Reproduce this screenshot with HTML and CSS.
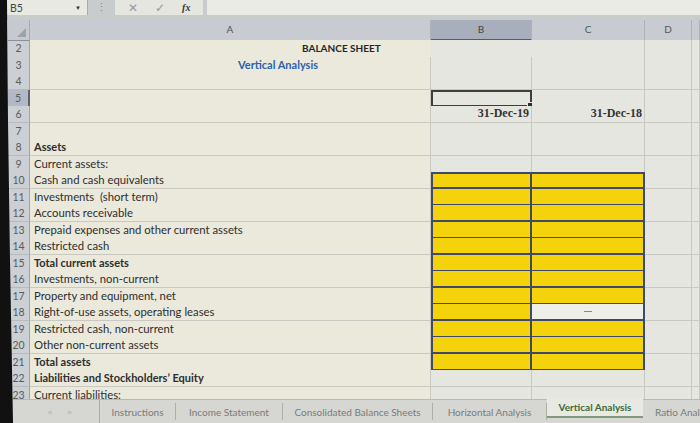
FILE: index.html
```html
<!DOCTYPE html>
<html>
<head>
<meta charset="utf-8">
<link rel="stylesheet" href="styles.css">
</head>
<body>
<div class="screen">
  <div class="topbar">
    <div class="namebox"><span>B5</span><span class="caret">&#9660;</span></div>
    <div class="dots">&#8942;</div>
    <div class="fbtns"><span class="fx-x">&#10005;</span><span class="fx-ok">&#10003;</span><span class="fx-fn">fx</span></div>
    <div class="formula"></div>
  </div>
  <div class="sheet">
    <div class="row hdr">
      <div class="corner"><span class="tri"></span></div>
      <div class="ch">A</div>
      <div class="ch selh">B</div>
      <div class="ch">C</div>
      <div class="ch">D</div>
      <div class="ch"></div>
    </div>
    <div class="row"><div class="rh">2</div><div class="c a nog"><span class="title">BALANCE SHEET</span></div><div class="c nog"></div><div class="c"></div><div class="c"></div><div class="c"></div></div>
    <div class="row"><div class="rh">3</div><div class="c a"><span class="sub">Vertical Analysis</span></div><div class="c"></div><div class="c"></div><div class="c"></div><div class="c"></div></div>
    <div class="row"><div class="rh">4</div><div class="c a"></div><div class="c"></div><div class="c"></div><div class="c"></div><div class="c"></div></div>
    <div class="row"><div class="rh selr">5</div><div class="c a"></div><div class="c active"></div><div class="c"></div><div class="c"></div><div class="c"></div></div>
    <div class="row"><div class="rh">6</div><div class="c a"></div><div class="c r date">31-Dec-19</div><div class="c r date">31-Dec-18</div><div class="c"></div><div class="c"></div></div>
    <div class="row"><div class="rh">7</div><div class="c a"></div><div class="c"></div><div class="c"></div><div class="c"></div><div class="c"></div></div>
    <div class="row"><div class="rh">8</div><div class="c a b">Assets</div><div class="c"></div><div class="c"></div><div class="c"></div><div class="c"></div></div>
    <div class="row"><div class="rh">9</div><div class="c a">Current assets:</div><div class="c"></div><div class="c"></div><div class="c"></div><div class="c"></div></div>
    <div class="row"><div class="rh">10</div><div class="c a">Cash and cash equivalents</div><div class="c y yl yt"></div><div class="c y yt"></div><div class="c"></div><div class="c"></div></div>
    <div class="row"><div class="rh">11</div><div class="c a">Investments&nbsp; (short term)</div><div class="c y yl"></div><div class="c y"></div><div class="c"></div><div class="c"></div></div>
    <div class="row"><div class="rh">12</div><div class="c a">Accounts receivable</div><div class="c y yl"></div><div class="c y"></div><div class="c"></div><div class="c"></div></div>
    <div class="row"><div class="rh">13</div><div class="c a">Prepaid expenses and other current assets</div><div class="c y yl"></div><div class="c y"></div><div class="c"></div><div class="c"></div></div>
    <div class="row"><div class="rh">14</div><div class="c a">Restricted cash</div><div class="c y yl"></div><div class="c y"></div><div class="c"></div><div class="c"></div></div>
    <div class="row"><div class="rh">15</div><div class="c a b">Total current assets</div><div class="c y yl"></div><div class="c y"></div><div class="c"></div><div class="c"></div></div>
    <div class="row"><div class="rh">16</div><div class="c a">Investments, non-current</div><div class="c y yl"></div><div class="c y"></div><div class="c"></div><div class="c"></div></div>
    <div class="row"><div class="rh">17</div><div class="c a">Property and equipment, net</div><div class="c y yl"></div><div class="c y"></div><div class="c"></div><div class="c"></div></div>
    <div class="row"><div class="rh">18</div><div class="c a">Right-of-use assets, operating leases</div><div class="c y yl"></div><div class="c y w"><span class="dash"></span></div><div class="c"></div><div class="c"></div></div>
    <div class="row"><div class="rh">19</div><div class="c a">Restricted cash, non-current</div><div class="c y yl"></div><div class="c y"></div><div class="c"></div><div class="c"></div></div>
    <div class="row"><div class="rh">20</div><div class="c a">Other non-current assets</div><div class="c y yl"></div><div class="c y"></div><div class="c"></div><div class="c"></div></div>
    <div class="row"><div class="rh">21</div><div class="c a b">Total assets</div><div class="c y yl"></div><div class="c y"></div><div class="c"></div><div class="c"></div></div>
    <div class="row"><div class="rh">22</div><div class="c a b">Liabilities and Stockholders&#8217; Equity</div><div class="c"></div><div class="c"></div><div class="c"></div><div class="c"></div></div>
    <div class="row"><div class="rh">23</div><div class="c a">Current liabilities:</div><div class="c"></div><div class="c"></div><div class="c"></div><div class="c"></div></div>
  </div>
  <div class="tabs">
    <div class="nav"><span>&#9664;</span><span>&#9654;</span></div>
    <div class="tab t1">Instructions</div>
    <div class="tab t2">Income Statement</div>
    <div class="tab t3">Consolidated Balance Sheets</div>
    <div class="tab t4">Horizontal Analysis</div>
    <div class="tab t5 on">Vertical Analysis</div>
    <div class="tab t6">Ratio Anal</div>
  </div>
  <div class="bezel"></div>
</div>
</body>
</html>
```
FILE: styles.css
```css
* { box-sizing: border-box; margin: 0; padding: 0; }
html, body { width: 700px; height: 423px; overflow: hidden; background: #d8d9d4; }
body { font-family: "Lato", "Liberation Sans", sans-serif; color: #2a2a2a; }

.screen { position: relative; width: 700px; height: 423px; display: flex; flex-direction: column; overflow: hidden; }

/* top formula bar */
.topbar { height: 20px; flex: none; display: flex; background: #c9cccd; padding-bottom: 5px; }
.namebox { width: 88px; background: #e9e9e4; border-right: 1px solid #a9abab; display: flex; align-items: center; justify-content: space-between; padding: 0 6px 0 10px; font-size: 10.5px; color: #444; }
.caret { font-size: 6px; color: #333; }
.dots { width: 27px; text-align: center; color: #888; font-size: 11px; line-height: 14px; }
.fbtns { width: 88px; background: #e6e6e1; display: flex; align-items: center; justify-content: space-around; padding: 0 4px; font-size: 12px; color: #9a9a9a; }
.fx-fn { font-family: "Liberation Serif", serif; font-style: italic; font-weight: bold; color: #333; font-size: 10px; }
.formula { flex: 1; margin-left: 4px; background: #ebebe6; }

/* sheet */
.sheet { flex: 1; overflow: hidden; padding-left: 8px; background: #e4e4de; }
.row { display: grid; grid-template-columns: 22px 401px 101px 113px 47px 1fr; height: 16.5px; }
.row.hdr { height: 20px; }
.corner { background: #c6cad0; border-right: 1px solid #a7abb1; border-bottom: 1px solid #8d9197; position: relative; }
.tri { position: absolute; right: 3px; bottom: 3px; width: 0; height: 0; border-left: 9px solid transparent; border-bottom: 9px solid #9ea3aa; }
.ch { background: #c8ccd2; border-right: 1px solid #aeb2b8; border-bottom: 1px solid #8d9197; font-size: 10px; color: #555; text-align: center; line-height: 19px; }
.ch.selh { background: #a8aebc; border-bottom: 2px solid #565b66; color: #444; }

.rh { background: #ccd0d5; border-right: 1px solid #9fa3a9; border-bottom: 1px solid #b7bbc0; font-size: 10.5px; color: #5a5a5a; text-align: center; line-height: 16px; }
.rh.selr { background: #b3b9c4; border-right: 2px solid #5d626c; }

.c { background: #e6e6e0; border-right: 1px solid #c9c9c1; border-bottom: 1px solid #c9c9c1; font-size: 11.3px; line-height: 15.5px; padding: 0 3px; white-space: nowrap; overflow: visible; position: relative; color: #2e2e2e; }
.c.a { background: #eae9dc; padding-left: 4px; }
.c.nog { border-right-color: transparent; }
.c.b { font-weight: bold; font-size: 11px; }
.c.r { text-align: right; }
.c.date { font-family: "Liberation Serif", serif; font-weight: bold; font-size: 12px; color: #333; padding-right: 2px; }
.title { padding-left: 268px; font-weight: bold; font-size: 10px; color: #262626; }
.sub { padding-left: 204px; font-weight: bold; font-size: 11px; color: #2e5fb0; }

.c.active { border: 2px solid #3e3e3a; }
.c.active::after { content: ""; position: absolute; right: -4px; bottom: -4px; width: 5px; height: 5px; background: #2f2f2c; border: 1px solid #e6e6e0; }

.c.y { background: #f4d20c; border-right: 2px solid #3f4a6b; border-bottom: 2px solid #3f4a6b; }
.c.y.yl { border-left: 2px solid #3f4a6b; }
.c.y.yt { border-top: 2px solid #3f4a6b; }
.c.y.w { background: #efefe9; display: flex; align-items: center; justify-content: center; }
.dash { width: 8px; height: 1px; background: #8a8a8a; }

/* sheet tabs */
.tabs { height: 24px; flex: none; display: flex; align-items: stretch; background: #d6d7d2; border-top: 1px solid #b9bab4; font-size: 10px; color: #7a7a7a; position: relative; z-index: 1; }
.nav { width: 100px; display: flex; justify-content: center; gap: 16px; align-items: center; padding-left: 20px; font-size: 6px; color: #c2c2bd; border-right: 1px solid #adaea8; }
.tab { display: flex; align-items: center; justify-content: center; white-space: nowrap; border-right: 1px solid #adaea8; margin: 3px 0; }
.t1 { width: 76px; }
.t2 { width: 107px; }
.t3 { width: 150px; }
.t4 { width: 114px; }
.t5 { width: 96px; }
.t6 { flex: 1; justify-content: flex-start; padding-left: 12px; border-right: none; overflow: hidden; }
.tab.on { margin: -2px 0 5px; background: #e9e9e3; color: #3c6a3a; font-weight: bold; border-bottom: 2px solid #7f9b7c; border-right: none; }

/* photo bezel at left edge */
.bezel { position: absolute; left: 0; top: 0; width: 26px; height: 423px; background: #111; clip-path: polygon(0 0, 7px 0, 8px 120px, 10px 260px, 13px 423px, 0 423px); z-index: 2; }
```
